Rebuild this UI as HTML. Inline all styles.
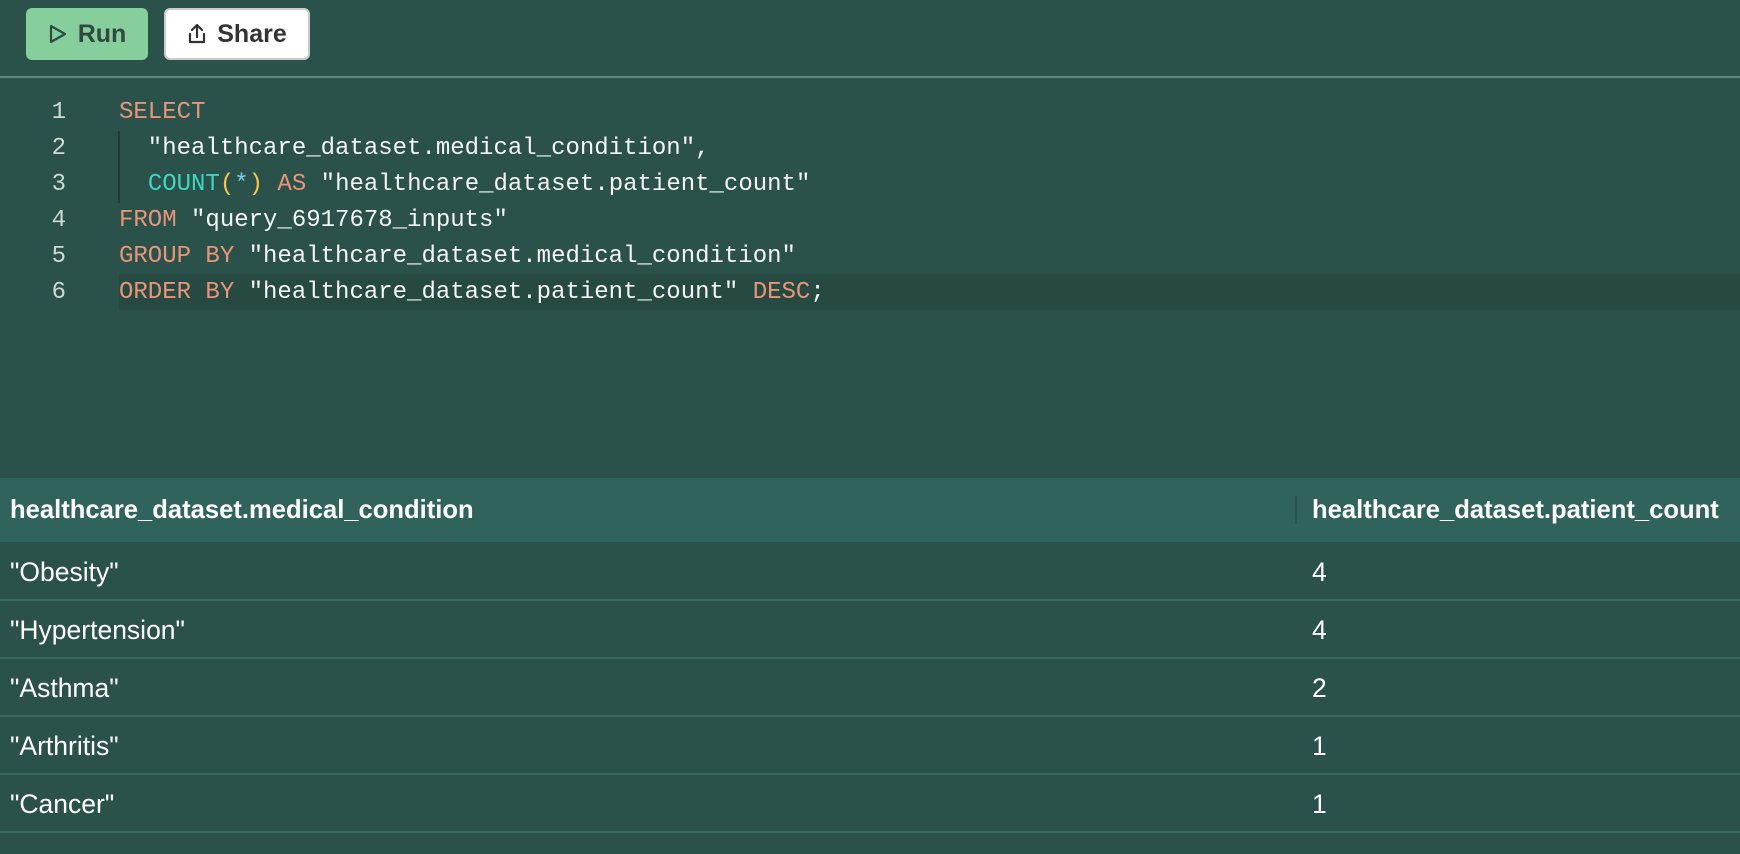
<!DOCTYPE html>
<html><head><style>
body{margin:0;width:1740px;height:854px;background:#2a524a;overflow:hidden;font-family:"Liberation Sans",sans-serif;position:relative}
.btn{position:absolute;top:8px;height:52px;border-radius:6px;box-sizing:border-box;font-size:25px;font-weight:bold;display:flex;align-items:center;justify-content:center;gap:10px}
.run{left:26px;width:122px;background:#86cf9c;color:#2f4a40}
.share{left:164px;width:146px;background:#fff;color:#333;border:2px solid #ccc}
.div{position:absolute;top:76px;left:0;width:1740px;height:2px;background:#5b8b7d}
.ln{position:absolute;left:24px;width:42px;text-align:right;font:24px "Liberation Mono",monospace;color:#d0d8d4}
.code{position:absolute;left:119px;font:24px/36px "Liberation Mono",monospace;color:#f4f4f4;white-space:pre}
.k{color:#e8957a}.f{color:#3fd6c0}.p{color:#f2c94c}.s{color:#7fd0f0}
.hl{position:absolute;left:119px;right:0;top:274px;height:36px;background:#264a42}
.guide{position:absolute;left:118px;top:131px;width:2px;height:72px;background:#1f3b35}
table{position:absolute;top:478px;left:0;width:1740px;border-collapse:collapse;color:#fff;font-size:26.5px}
th{background:#30635b;height:64px;text-align:left;padding:0 0 0 10px;font-weight:bold;font-size:25.6px}
td{height:58px;border-bottom:2px solid #356b61;padding:3px 0 0 10px;box-sizing:border-box}
th.c2,td.c2{padding-left:17px}
th.c2{position:relative}
th.c2:before{content:"";position:absolute;left:0;top:18px;height:28px;width:2px;background:#27544b}
</style></head><body>
<div class="btn run"><svg width="20" height="22" viewBox="0 0 20 22"><path d="M3 3 L17 11 L3 19 Z" fill="none" stroke="#2f4a40" stroke-width="2.2" stroke-linejoin="round"/></svg>Run</div>
<div class="btn share"><svg width="20" height="24" viewBox="0 0 20 24"><path d="M10 15 V3 M5 8 L10 3 L15 8 M3 12 V20 H17 V12" fill="none" stroke="#333" stroke-width="2.2" stroke-linecap="round" stroke-linejoin="round"/></svg>Share</div>
<div class="div"></div>
<div class="hl"></div>
<div class="guide"></div>
<div class="ln" style="top:95px;line-height:36px">1<br>2<br>3<br>4<br>5<br>6</div>
<div class="code" style="top:95px"><span class="k">SELECT</span>
  "healthcare_dataset.medical_condition",
  <span class="f">COUNT</span><span class="p">(</span><span class="s">*</span><span class="p">)</span> <span class="k">AS</span> "healthcare_dataset.patient_count"
<span class="k">FROM</span> "query_6917678_inputs"
<span class="k">GROUP BY</span> "healthcare_dataset.medical_condition"
<span class="k">ORDER BY</span> "healthcare_dataset.patient_count" <span class="k">DESC</span>;</div>
<table>
<tr><th style="width:1285px">healthcare_dataset.medical_condition</th><th class="c2">healthcare_dataset.patient_count</th></tr>
<tr><td>"Obesity"</td><td class="c2">4</td></tr>
<tr><td>"Hypertension"</td><td class="c2">4</td></tr>
<tr><td>"Asthma"</td><td class="c2">2</td></tr>
<tr><td>"Arthritis"</td><td class="c2">1</td></tr>
<tr><td>"Cancer"</td><td class="c2">1</td></tr>
</table>
</body></html>
